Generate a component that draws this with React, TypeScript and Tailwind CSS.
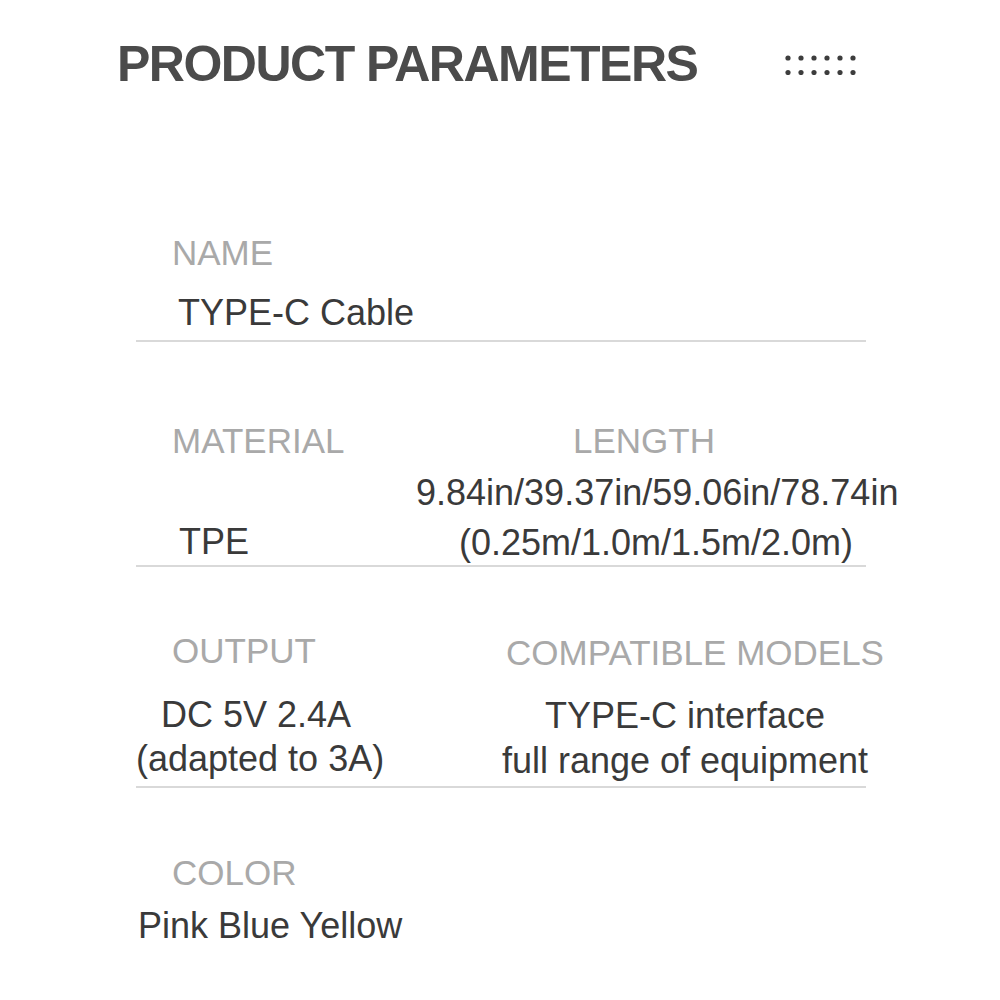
// Product parameters sheet
const label = "text-[35px] leading-[44px] text-[#a9a9a9] whitespace-nowrap";
const value = "text-[36px] leading-[44px] text-[#3a3a3a] whitespace-nowrap";

function Dots() {
  const cols = [0, 1, 2, 3, 4, 5];
  return (
    <svg width="72" height="20" viewBox="0 0 72 20">
      {[0, 1].map((r) =>
        cols.map((c) => (
          <circle key={`${r}-${c}`} cx={3 + c * 13} cy={3 + r * 14.5} r="2.6" fill="#3d3d3d" />
        ))
      )}
    </svg>
  );
}

export default function App() {
  return (
    <div className="w-[1000px] h-[1000px] bg-white overflow-hidden font-['Liberation_Sans',Arial,sans-serif]">
      {/* Header */}
      <div className="flex items-center pt-[34px] pl-[117px] h-[94px]">
        <h1 className="text-[50px] leading-[60px] font-bold tracking-[-1.5px] text-[#4b4b4b]">
          PRODUCT PARAMETERS
        </h1>
        <div className="ml-[88px] mt-[2px]">
          <Dots />
        </div>
      </div>

      <div className="ml-[136px] w-[730px]">
        {/* Name */}
        <div className={`mt-[137px] pl-[36px] ${label}`}>NAME</div>
        <div className={`mt-[16px] pl-[42px] ${value}`}>TYPE-C Cable</div>
        <div className="mt-[5px] h-[2px] bg-[#d9d9d9]" />

        {/* Material / Length */}
        <div className="mt-[77px] flex">
          <div className="w-[280px] shrink-0 flex flex-col justify-between">
            <div className={`pl-[36px] ${label}`}>MATERIAL</div>
            <div className={`pl-[43px] mb-[1px] ${value}`}>TPE</div>
          </div>
          <div className="w-[480px] shrink-0 text-center">
            <div className={`pr-[24px] ${label}`}>LENGTH</div>
            <div className={`mt-[8px] ${value}`}>9.84in/39.37in/59.06in/78.74in</div>
            <div className={`mt-[6px] ${value}`}>(0.25m/1.0m/1.5m/2.0m)</div>
          </div>
        </div>
        <div className="h-[2px] bg-[#d9d9d9]" />

        {/* Output / Compatible models */}
        <div className="mt-[62px] flex">
          <div className="w-[240px] shrink-0">
            <div className={`pl-[36px] ${label}`}>OUTPUT</div>
            <div className="text-center">
              <div className={`mt-[20px] ${value}`}>DC 5V 2.4A</div>
              <div className={`pr-[8px] ${value}`}>(adapted to 3A)</div>
            </div>
          </div>
          <div className="ml-[104px] w-[410px] shrink-0 text-center">
            <div className={`mt-[2px] pl-[20px] ${label}`}>COMPATIBLE MODELS</div>
            <div className={`mt-[19px] ${value}`}>TYPE-C interface</div>
            <div className={`mt-[1px] ${value}`}>full range of equipment</div>
          </div>
        </div>
        <div className="mt-[3px] h-[2px] bg-[#d9d9d9]" />

        {/* Color */}
        <div className={`mt-[63px] pl-[36px] ${label}`}>COLOR</div>
        <div className={`mt-[9px] pl-[2px] ${value}`}>Pink Blue Yellow</div>
      </div>
    </div>
  );
}
